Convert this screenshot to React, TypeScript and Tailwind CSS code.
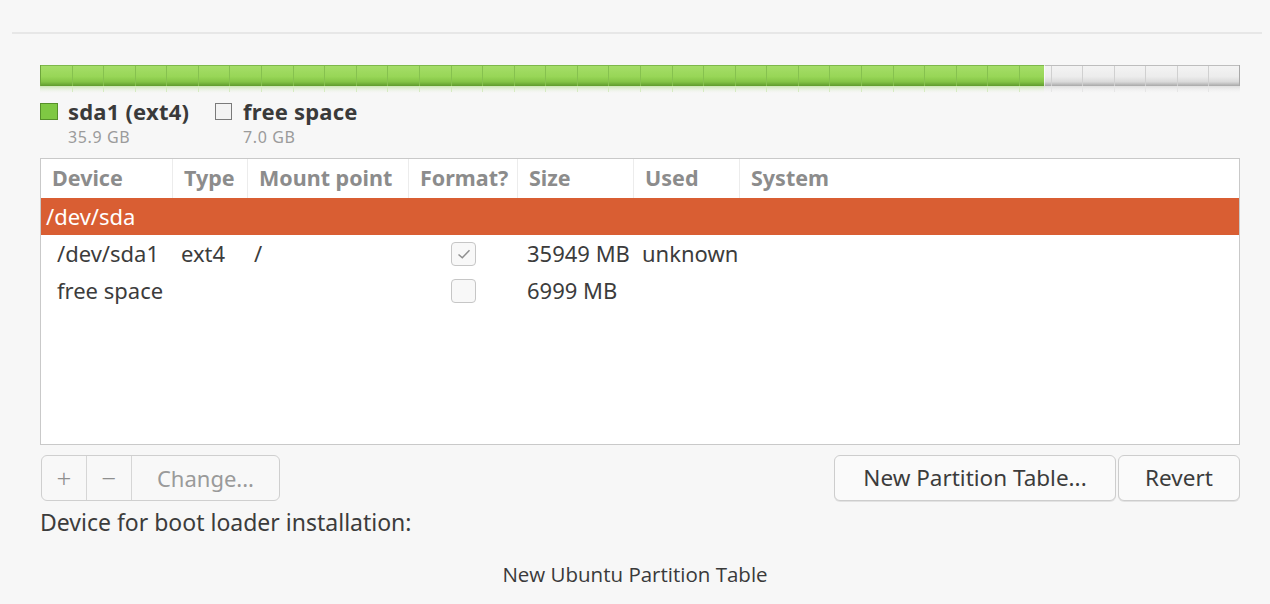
import React from "react";

const FONT = { fontFamily: "'Noto Sans', 'Open Sans', sans-serif" };

const COLS = "grid grid-cols-[132px_75px_161px_109px_116px_106px_1fr]";

function PartitionBar() {
  const cells = Array.from({ length: 38 }, (_, i) => i);
  const cw = 1200 / 38;
  const greenW = 1004;
  return (
    <svg width="1200" height="30" viewBox="0 0 1200 30" className="block">
      <defs>
        <linearGradient id="g" x1="0" y1="0" x2="0" y2="1">
          <stop offset="0" stopColor="#a6de6a" />
          <stop offset="0.55" stopColor="#98d657" />
          <stop offset="0.8" stopColor="#84c446" />
          <stop offset="1" stopColor="#5f9a2e" />
        </linearGradient>
        <linearGradient id="w" x1="0" y1="0" x2="0" y2="1">
          <stop offset="0" stopColor="#f4f4f4" />
          <stop offset="0.55" stopColor="#ececec" />
          <stop offset="0.8" stopColor="#dadada" />
          <stop offset="1" stopColor="#a8a8a8" />
        </linearGradient>
        <linearGradient id="gr" x1="0" y1="0" x2="0" y2="1">
          <stop offset="0" stopColor="#b9dd97" stopOpacity="0.7" />
          <stop offset="1" stopColor="#f7f7f7" stopOpacity="0" />
        </linearGradient>
        <linearGradient id="wr" x1="0" y1="0" x2="0" y2="1">
          <stop offset="0" stopColor="#d5d5d5" stopOpacity="0.7" />
          <stop offset="1" stopColor="#f7f7f7" stopOpacity="0" />
        </linearGradient>
      </defs>
      <rect x="0" y="0" width={greenW} height="21" fill="url(#g)" />
      <rect x={greenW} y="0" width={1200 - greenW} height="21" fill="url(#w)" />
      <rect x="0" y="21" width={greenW} height="8" fill="url(#gr)" />
      <rect x={greenW} y="21" width={1200 - greenW} height="8" fill="url(#wr)" />
      <line x1="0" y1="0.5" x2={greenW} y2="0.5" stroke="#7db84a" />
      <line x1={greenW} y1="0.5" x2="1200" y2="0.5" stroke="#bdbdbd" />
      <line x1="0.5" y1="0" x2="0.5" y2="21" stroke="#6ea53c" />
      <line x1="1199.5" y1="0" x2="1199.5" y2="21" stroke="#a9a9a9" />
      {cells.slice(1).map((i) => {
        const x = Math.round(i * cw) + 0.5;
        const green = x < greenW;
        return (
          <g key={i}>
            <line x1={x} y1="1" x2={x} y2="21" stroke={green ? "#86c14f" : "#d0d0d0"} />
            <line x1={x} y1="21" x2={x} y2="27" stroke={green ? "#d6ebc2" : "#e6e6e6"} />
          </g>
        );
      })}
      <line x1={greenW + 0.5} y1="0" x2={greenW + 0.5} y2="21" stroke="#ffffff" strokeOpacity="0.6" />
    </svg>
  );
}

function Check({ checked }: { checked?: boolean }) {
  return (
    <div className="flex h-[24px] w-[25px] items-center justify-center rounded-[4px] border border-[#c6c6c6] bg-[#f8f8f8]">
      {checked && (
        <svg width="16" height="16" viewBox="0 0 16 16">
          <path d="M2.5 8.5 L6.3 11.8 L13.5 4.2" fill="none" stroke="#8f8f8f" strokeWidth="1.5" />
        </svg>
      )}
    </div>
  );
}

export default function App() {
  return (
    <div className="h-[604px] w-[1270px] overflow-hidden bg-[#f7f7f7] text-[#3c3c3c]" style={FONT}>
      <div className="px-[12px] pt-[32px]">
        <div className="h-[2px] w-[1250px] bg-[#e7e7e7]" />
      </div>

      <div className="ml-[40px] w-[1200px]">
        <div className="mt-[31px]">
          <PartitionBar />
        </div>

        {/* legend */}
        <div className="mt-[3px] flex gap-[26px]">
          <div className="flex gap-[10px]">
            <div className="mt-[5px] h-[17px] w-[18px] border border-[#56902a] bg-[#7fc843]" />
            <div>
              <div className="text-[22px] font-bold leading-[26px] tracking-[0.2px] text-[#3a3a3a]">sda1 (ext4)</div>
              <div className="mt-[1px] text-[16px] leading-[24px] tracking-[0.6px] text-[#9b9b9b]">35.9 GB</div>
            </div>
          </div>
          <div className="flex gap-[11px]">
            <div className="mt-[5px] h-[17px] w-[17px] border border-[#7a7a7a] bg-[#f3f3f3]" />
            <div>
              <div className="text-[22px] font-bold leading-[26px] tracking-[0.2px] text-[#3a3a3a]">free space</div>
              <div className="mt-[1px] text-[16px] leading-[24px] tracking-[0.6px] text-[#9b9b9b]">7.0 GB</div>
            </div>
          </div>
        </div>

        {/* partition table */}
        <div className="mt-[9px] h-[287px] w-[1200px] border border-[#c9c9c9] bg-white">
          <div className={`${COLS} h-[39px] items-center text-[21.5px] font-bold text-[#8c8c8c]`}>
            {["Device", "Type", "Mount point", "Format?", "Size", "Used", "System"].map((h, i) => (
              <div
                key={h}
                className={`flex h-full items-center pl-[11px] ${i < 6 ? "border-r border-[#ececec]" : ""}`}
              >
                {h}
              </div>
            ))}
          </div>
          <div className="flex h-[37px] items-center bg-[#d95e33] pl-[5px] text-[22px] text-white">/dev/sda</div>
          <div className={`${COLS} h-[37px] items-center text-[22px]`}>
            <div className="pl-[16px]">/dev/sda1</div>
            <div className="pl-[8px]">ext4</div>
            <div className="pl-[6px]">/</div>
            <div className="flex justify-center">
              <Check checked />
            </div>
            <div className="pl-[9px]">35949 MB</div>
            <div className="pl-[8px]">unknown</div>
            <div />
          </div>
          <div className={`${COLS} h-[37px] items-center text-[22px]`}>
            <div className="pl-[16px]">free space</div>
            <div />
            <div />
            <div className="flex justify-center">
              <Check />
            </div>
            <div className="pl-[9px]">6999 MB</div>
            <div />
            <div />
          </div>
        </div>

        {/* buttons */}
        <div className="mt-[10px] flex items-center justify-between">
          <div className="ml-[1px] flex h-[46px] overflow-hidden rounded-[6px] border border-[#cfcfcf] bg-[#f8f8f8] text-[22px]">
            <div className="flex w-[45px] items-center justify-center border-r border-[#d6d6d6] text-[26px] font-light text-[#8f8f8f]">
              +
            </div>
            <div className="flex w-[45px] items-center justify-center border-r border-[#d6d6d6] text-[26px] font-light text-[#8f8f8f]">
              −
            </div>
            <div className="flex w-[147px] items-center justify-center text-[#9a9a9a]">Change...</div>
          </div>
          <div className="flex gap-[2px] text-[22.5px]">
            <div className="flex h-[46px] w-[282px] items-center justify-center rounded-[6px] border border-[#cdcdcd] bg-[#fafafa] shadow-[0_1px_0_#e2e2e2]">
              New Partition Table...
            </div>
            <div className="flex h-[46px] w-[122px] items-center justify-center rounded-[6px] border border-[#cdcdcd] bg-[#fafafa] shadow-[0_1px_0_#e2e2e2]">
              Revert
            </div>
          </div>
        </div>

        <div className="mt-[7px] text-[23px] leading-[28px]">Device for boot loader installation:</div>
      </div>

      <div
        className="mt-[23px] text-center text-[20.5px] text-[#3a3a3a]"
        style={{ fontFamily: "'Open Sans', 'Noto Sans', sans-serif" }}
      >
        New Ubuntu Partition Table
      </div>
    </div>
  );
}
